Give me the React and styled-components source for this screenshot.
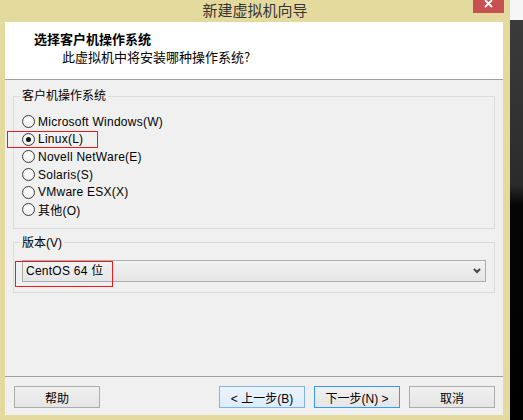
import React from 'react';
import styled, { createGlobalStyle } from 'styled-components';

const GlobalStyle = createGlobalStyle`
  html, body {
    margin: 0;
    padding: 0;
  }
  body {
    width: 523px;
    height: 420px;
    overflow: hidden;
    font-family: "Liberation Sans", "Noto Sans CJK SC", sans-serif;
    font-size: 12px;
    color: #000;
  }
`;

const Screen = styled.div`
  display: flex;
  width: 523px;
  height: 420px;
`;

const Desktop = styled.div`
  width: 13px;
  background: linear-gradient(
    to bottom,
    #f6f6f6 0,
    #f6f6f6 20px,
    #3b3b3b 20px,
    #2b2b2b 185px,
    #050505 205px,
    #000 100%
  );
`;

const Window = styled.div`
  width: 510px;
  height: 420px;
  display: flex;
  flex-direction: column;
  background: #e4da9d;
`;

const TitleBar = styled.div`
  height: 22px;
  display: grid;
  grid-template-columns: 1fr auto 1fr;
  align-items: start;
`;

const Title = styled.div`
  grid-column: 2;
  font-family: "Noto Sans CJK SC", sans-serif;
  font-size: 15px;
  line-height: 20px;
  color: #363636;
`;

const CloseButton = styled.div`
  grid-column: 3;
  justify-self: end;
  margin-right: 6px;
  width: 31px;
  height: 13px;
  background: #c75050;
  display: flex;
  justify-content: center;
  align-items: flex-start;
`;

const Frame = styled.div`
  flex: 1;
  display: flex;
  padding: 0 7px 5px 5px;
  min-height: 0;
`;

const Content = styled.div`
  flex: 1;
  display: flex;
  flex-direction: column;
  background: #f0f0f0;
`;

const Header = styled.div`
  height: 58px;
  box-sizing: border-box;
  background: #fff;
  border-bottom: 1px solid #a0a0a0;
  padding: 9px 0 0 29px;
  font-family: "Noto Sans CJK SC", sans-serif;
`;

const HeaderTitle = styled.div`
  font-size: 13px;
  font-weight: bold;
  line-height: 16px;
`;

const HeaderSub = styled.div`
  font-size: 13px;
  line-height: 20px;
  padding-left: 28px;
`;

const Body = styled.div`
  flex: 1;
  padding: 9px 8px 0 8px;
`;

const Group = styled.fieldset`
  margin: ${(p) => (p.$first ? '0' : '7px 0 0')};
  border: 1px solid #dcdcdc;
  padding: 10px 8px ${(p) => (p.$first ? '9px' : '10px')} 8px;
  min-width: 0;
`;

const Legend = styled.legend`
  padding: 0 2px;
  margin-left: -2px;
  font-size: 12px;
  line-height: 14px;
`;

const RadioRow = styled.div`
  position: relative;
  height: 17.6px;
  display: flex;
  align-items: center;
  gap: 3px;
`;

const RadioLabel = styled.span`
  letter-spacing: 0.25px;
`;

const RadioCircle = styled.span`
  width: 13px;
  height: 13px;
  box-sizing: border-box;
  border-radius: 50%;
  border: 1px solid #3c3c3c;
  background: radial-gradient(circle at 50% 40%, #ffffff 0, #f2f2f2 60%, #e2e2e2 100%);
  display: flex;
  align-items: center;
  justify-content: center;

  &::after {
    content: '';
    width: 5px;
    height: 5px;
    border-radius: 50%;
    background: ${(p) => (p.$checked ? '#111' : 'transparent')};
  }
`;

const Mark = styled.div`
  position: absolute;
  left: ${(p) => p.$left}px;
  top: ${(p) => p.$top}px;
  width: ${(p) => p.$width}px;
  height: ${(p) => p.$height}px;
  box-sizing: border-box;
  border: 1px solid #e81c1c;
  pointer-events: none;
`;

const Select = styled.div`
  position: relative;
  height: 22px;
  box-sizing: border-box;
  border: 1px solid #acacac;
  background: linear-gradient(to bottom, #f2f2f2, #e5e5e5);
  padding: 0 4px 0 3px;
  display: flex;
  align-items: center;
  justify-content: space-between;
  line-height: 20px;
  letter-spacing: 0.25px;
`;

const Footer = styled.div`
  height: 39px;
  box-sizing: border-box;
  border-top: 1px solid #a0a0a0;
  padding: 9px 8px 0 9px;
  display: flex;
  justify-content: space-between;
  align-items: flex-start;
`;

const ButtonGroup = styled.div`
  display: flex;
  gap: 9px;
`;

const Button = styled.button`
  width: 86px;
  height: 22px;
  box-sizing: border-box;
  margin: 0;
  padding: 0;
  font-family: "Liberation Sans", "Noto Sans CJK SC", sans-serif;
  font-size: 12px;
  color: #000;
  border: 1px solid ${(p) => (p.$state === 'hover' ? '#7eb4ea' : p.$state === 'default' ? '#3399ff' : '#acacac')};
  background: ${(p) =>
    p.$state === 'hover'
      ? 'linear-gradient(to bottom, #ecf4fc, #dcecfc)'
      : 'linear-gradient(to bottom, #f0f0f0, #e5e5e5)'};
`;

const osList = [
  'Microsoft Windows(W)',
  'Linux(L)',
  'Novell NetWare(E)',
  'Solaris(S)',
  'VMware ESX(X)',
  '其他(O)',
];

const App = () => {
  return (
    <Screen>
      <GlobalStyle />
      <Window>
        <TitleBar>
          <Title>新建虚拟机向导</Title>
          <CloseButton>
            <svg width="9" height="8" viewBox="0 0 9 8">
              <path d="M1 0 L8 7 M8 0 L1 7" stroke="#fff" strokeWidth="1.8" />
            </svg>
          </CloseButton>
        </TitleBar>
        <Frame>
          <Content>
            <Header>
              <HeaderTitle>选择客户机操作系统</HeaderTitle>
              <HeaderSub>此虚拟机中将安装哪种操作系统?</HeaderSub>
            </Header>
            <Body>
              <Group $first>
                <Legend>客户机操作系统</Legend>
                {osList.map((name) => (
                  <RadioRow key={name}>
                    <RadioCircle $checked={name === 'Linux(L)'} />
                    <RadioLabel>{name}</RadioLabel>
                    {name === 'Linux(L)' && <Mark $left={-15} $top={0} $width={91} $height={17} />}
                  </RadioRow>
                ))}
              </Group>
              <Group>
                <Legend>版本(V)</Legend>
                <Select>
                  <span>CentOS 64 位</span>
                  <svg width="8" height="6" viewBox="0 0 8 6">
                    <path d="M1 1 L4 4 L7 1" stroke="#444" strokeWidth="2" fill="none" />
                  </svg>
                  <Mark $left={-8} $top={0} $width={98} $height={26} />
                </Select>
              </Group>
            </Body>
            <Footer>
              <Button>帮助</Button>
              <ButtonGroup>
                <Button $state="hover">&lt; 上一步(B)</Button>
                <Button $state="default">下一步(N) &gt;</Button>
                <Button>取消</Button>
              </ButtonGroup>
            </Footer>
          </Content>
        </Frame>
      </Window>
      <Desktop />
    </Screen>
  );
};

export default App;
